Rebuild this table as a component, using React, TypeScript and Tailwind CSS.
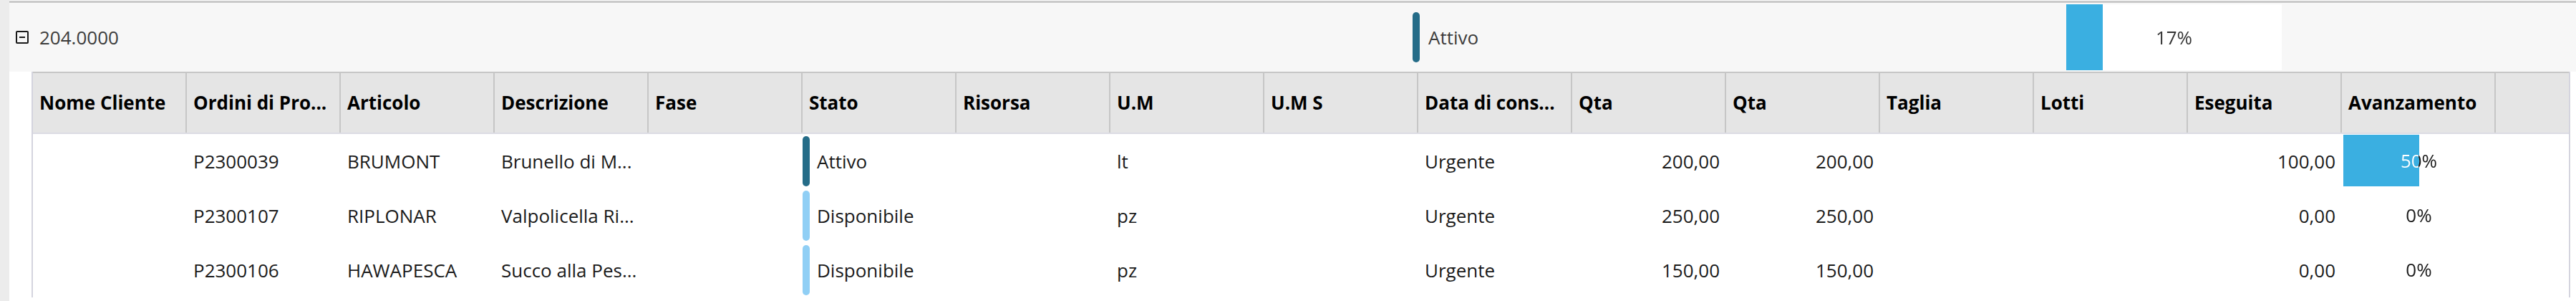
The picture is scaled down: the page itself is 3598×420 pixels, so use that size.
import React from "react";

const columns = [
  "Nome Cliente",
  "Ordini di Pro...",
  "Articolo",
  "Descrizione",
  "Fase",
  "Stato",
  "Risorsa",
  "U.M",
  "U.M S",
  "Data di cons...",
  "Qta",
  "Qta",
  "Taglia",
  "Lotti",
  "Eseguita",
  "Avanzamento",
];

type Riga = {
  ordine: string;
  articolo: string;
  descrizione: string;
  stato: "Attivo" | "Disponibile";
  um: string;
  data: string;
  qta: string;
  qtaS: string;
  eseguita: string;
  avanzamento: number;
};

const righe: Riga[] = [
  {
    ordine: "P2300039",
    articolo: "BRUMONT",
    descrizione: "Brunello di M...",
    stato: "Attivo",
    um: "lt",
    data: "Urgente",
    qta: "200,00",
    qtaS: "200,00",
    eseguita: "100,00",
    avanzamento: 50,
  },
  {
    ordine: "P2300107",
    articolo: "RIPLONAR",
    descrizione: "Valpolicella Ri...",
    stato: "Disponibile",
    um: "pz",
    data: "Urgente",
    qta: "250,00",
    qtaS: "250,00",
    eseguita: "0,00",
    avanzamento: 0,
  },
  {
    ordine: "P2300106",
    articolo: "HAWAPESCA",
    descrizione: "Succo alla Pes...",
    stato: "Disponibile",
    um: "pz",
    data: "Urgente",
    qta: "150,00",
    qtaS: "150,00",
    eseguita: "0,00",
    avanzamento: 0,
  },
];

function Cell({ children, right }: { children?: React.ReactNode; right?: boolean }) {
  return (
    <div
      className={
        right
          ? "flex w-[215px] shrink-0 items-center justify-end pr-[9px] whitespace-nowrap"
          : "flex w-[215px] shrink-0 items-center pl-[9px] whitespace-nowrap"
      }
    >
      {children}
    </div>
  );
}

function Progress({ pct, dark = "#1a1a1a" }: { pct: number; dark?: string }) {
  return (
    <div className="relative h-full w-full">
      <div className="h-full bg-[#3aafe1]" style={{ width: `${pct}%` }} />
      {/* label turns white where it sits on the filled part */}
      <div
        className="absolute inset-0 flex items-center justify-center bg-clip-text text-transparent"
        style={{
          backgroundImage: `linear-gradient(to right, #ffffff ${pct}%, ${dark} ${pct}%)`,
        }}
      >
        {pct}%
      </div>
    </div>
  );
}

export default function App() {
  return (
    <div className="flex h-[420px] w-[3598px] overflow-hidden bg-white font-['Open_Sans','Noto_Sans',sans-serif] text-[26px] text-[#1a1a1a]">
      <div className="h-full w-[13px] shrink-0 bg-[#ececec]" />

      <div className="flex min-w-0 flex-1 flex-col">
        <div className="mt-[1px] h-[3px] bg-[#cacaca]" />

        {/* group row */}
        <div className="flex h-[96px] items-center bg-[#f7f7f7] text-[#3c3c3c]">
          <div className="flex w-[1960px] shrink-0 items-center gap-[15px] pl-[9px]">
            <div className="flex h-[18px] w-[18px] items-center justify-center rounded-[2px] border-2 border-[#1a1a1a]">
              <div className="h-[2px] w-[8px] bg-[#1a1a1a]" />
            </div>
            <span>204.0000</span>
          </div>
          <div className="flex w-[913px] shrink-0 items-center">
            <div className="h-[70px] w-[10px] rounded-full bg-[#256c88]" />
            <span className="ml-[12px]">Attivo</span>
          </div>
          <div className="h-[92px] w-[301px] shrink-0 bg-white">
            <Progress pct={17} dark="#333333" />
          </div>
        </div>

        {/* detail grid */}
        <div className="flex pl-[31px]">
          <div className="flex w-[3546px] flex-col border-x-2 border-[#d4d4de]">
            <div className="flex h-[87px] border-y-2 border-t-[#c6c6c6] border-b-[#dcdce4] bg-[#e5e5e5] font-bold text-black">
              {columns.map((c, i) => (
                <div
                  key={i}
                  className="flex w-[215px] shrink-0 items-center border-r-2 border-[#c6c6c6] pl-[9px] whitespace-nowrap"
                >
                  {c}
                </div>
              ))}
              <div className="flex-1" />
            </div>

            {righe.map((r) => (
              <div key={r.ordine} className="flex h-[76px]">
                <Cell />
                <Cell>{r.ordine}</Cell>
                <Cell>{r.articolo}</Cell>
                <Cell>{r.descrizione}</Cell>
                <Cell />
                <div className="flex w-[215px] shrink-0 items-center">
                  <div
                    className={
                      r.stato === "Attivo"
                        ? "h-[70px] w-[10px] rounded-full bg-[#256c88]"
                        : "h-[70px] w-[10px] rounded-full bg-[#90cff5]"
                    }
                  />
                  <span className="ml-[10px]">{r.stato}</span>
                </div>
                <Cell />
                <Cell>{r.um}</Cell>
                <Cell />
                <Cell>{r.data}</Cell>
                <Cell right>{r.qta}</Cell>
                <Cell right>{r.qtaS}</Cell>
                <Cell />
                <Cell />
                <Cell right>{r.eseguita}</Cell>
                <div className="w-[215px] shrink-0 px-[2px] pt-[1px] pb-[3px]">
                  <Progress pct={r.avanzamento} />
                </div>
                <div className="flex-1" />
              </div>
            ))}
          </div>
        </div>
      </div>
    </div>
  );
}
